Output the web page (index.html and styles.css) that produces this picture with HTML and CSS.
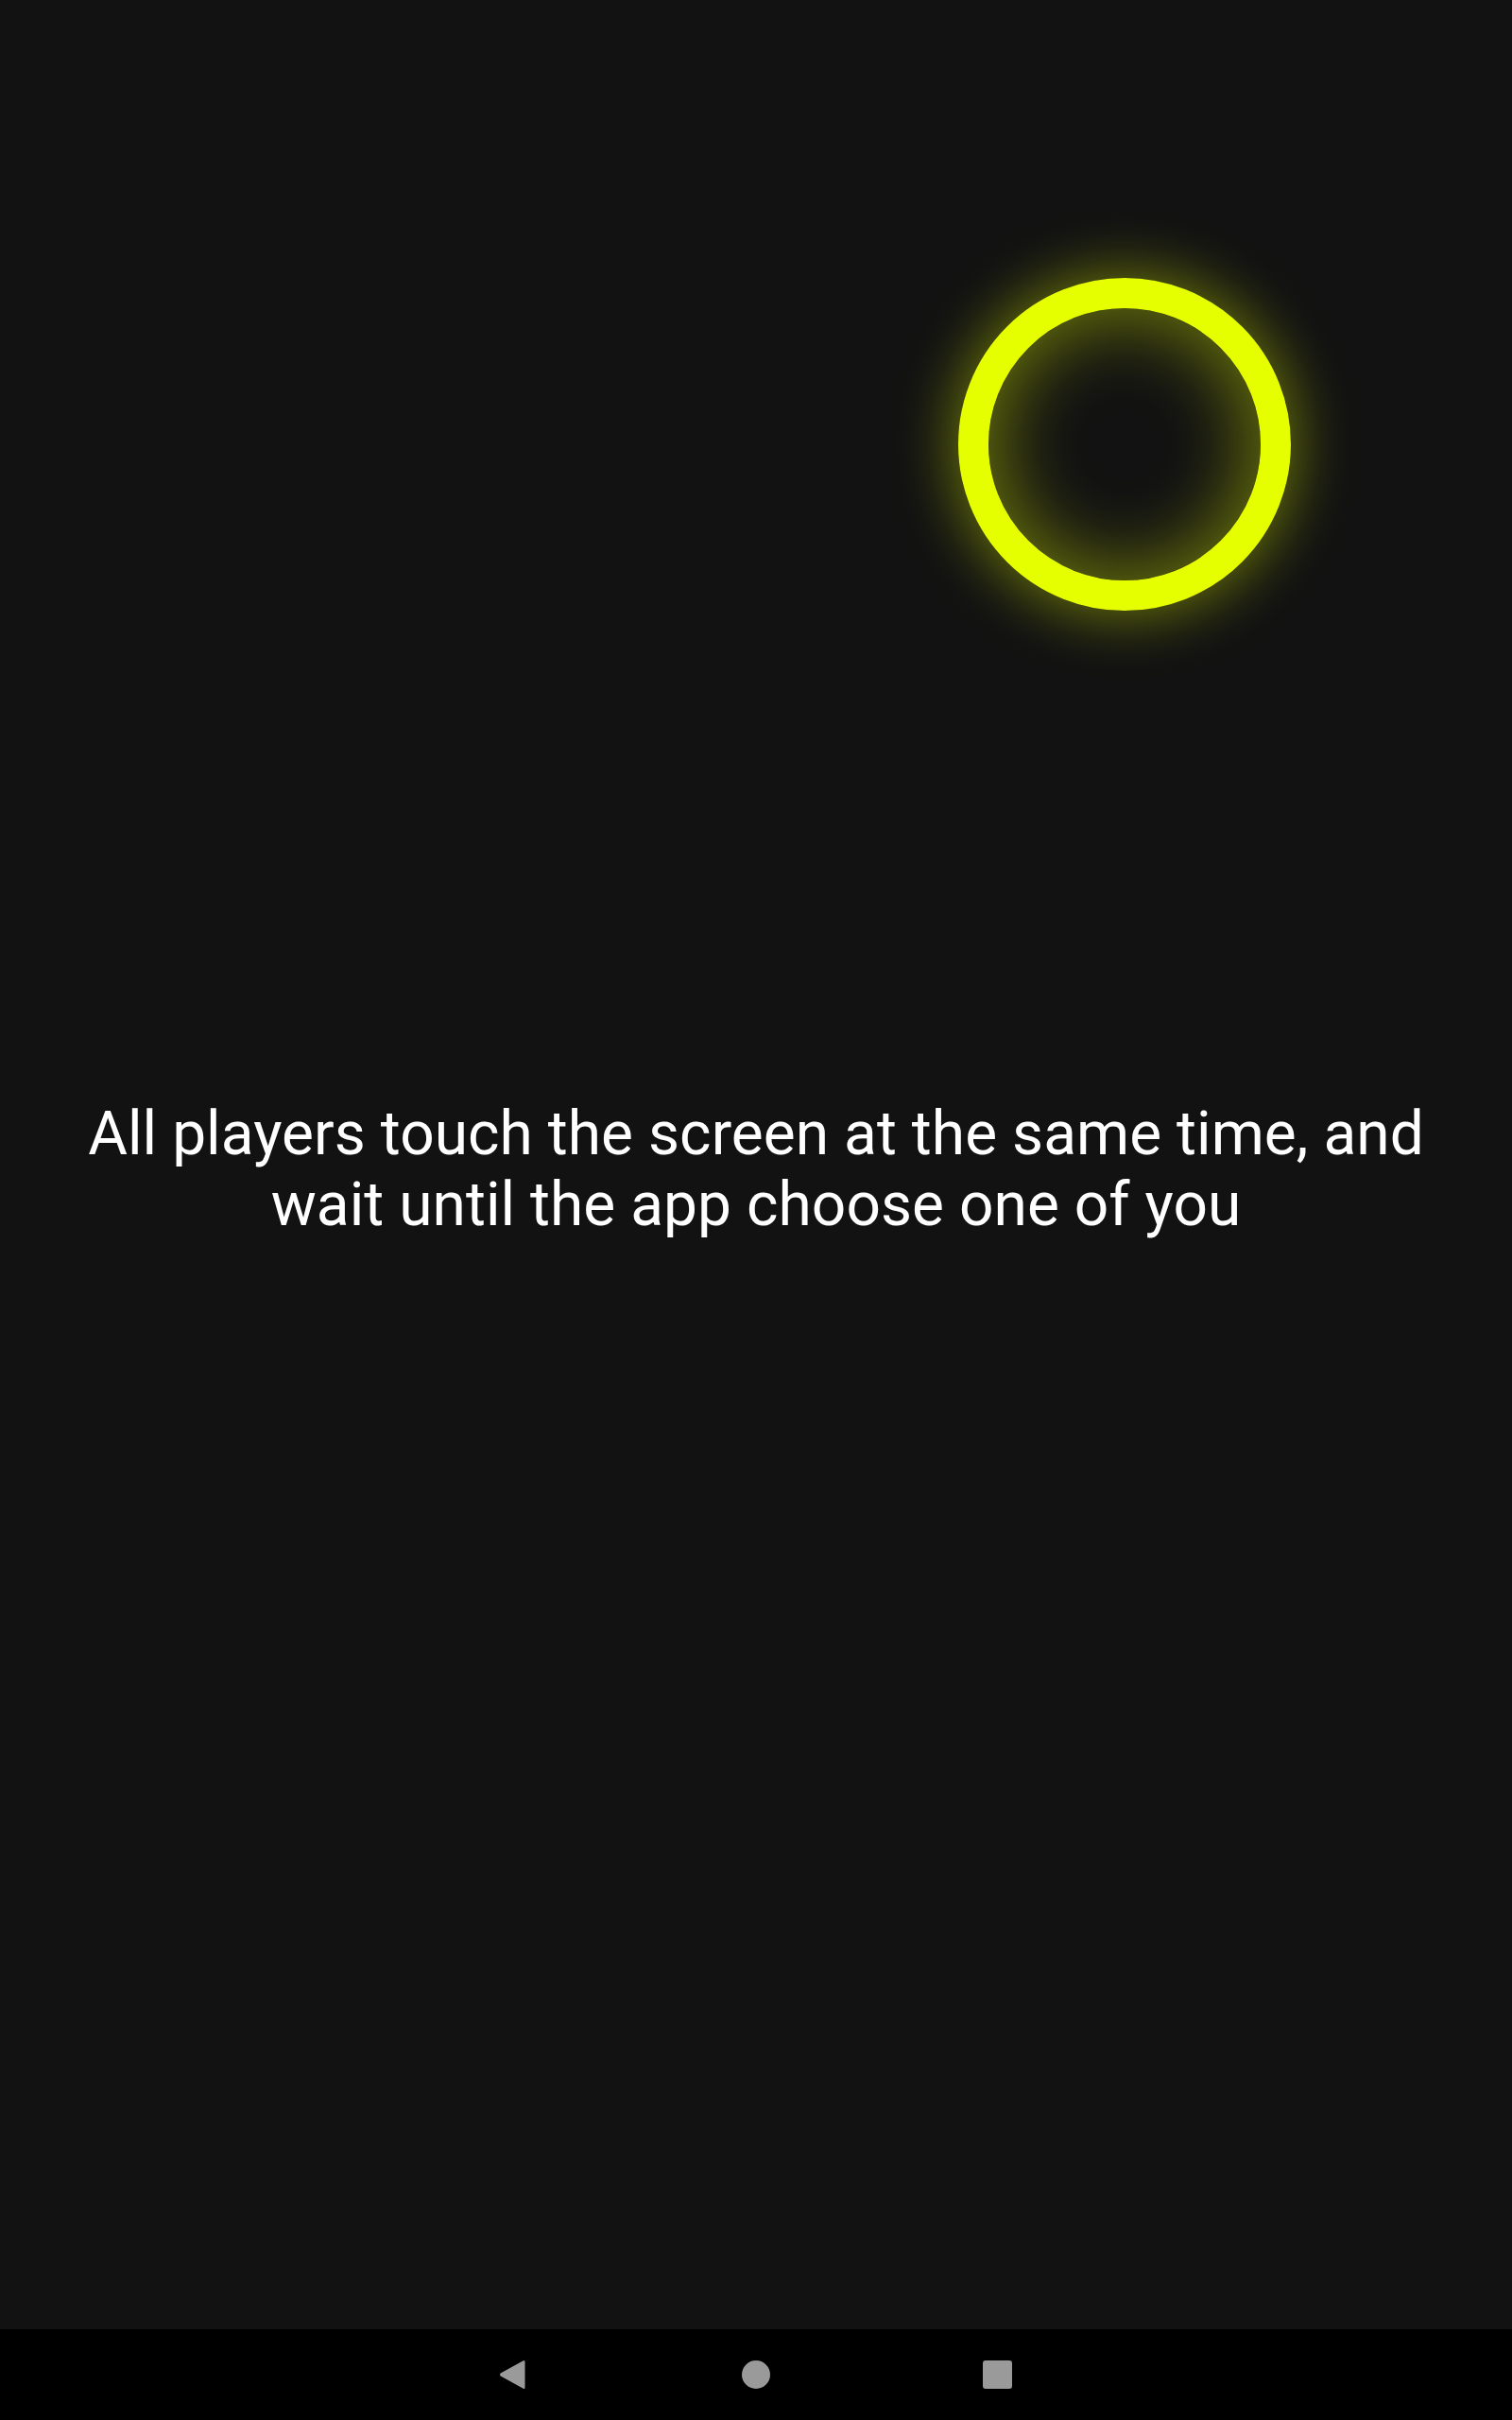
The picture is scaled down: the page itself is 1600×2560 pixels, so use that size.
FILE: index.html
```html
<!DOCTYPE html>
<html lang="en">
<head>
<meta charset="utf-8">
<title>Chooser</title>
<link rel="stylesheet" href="styles.css">
</head>
<body>
<div class="screen">
  <main class="stage">
    <div class="touch" aria-hidden="true"></div>
    <p class="hint">All players touch the screen at the same time, and wait until the app choose one of you</p>
  </main>
  <nav class="navbar">
    <svg class="nav-back" width="30" height="34" viewBox="0 0 30 34" aria-label="Back">
      <path d="M29.5 3.5 Q29.5 1 27.3 2.4 L3.7 15.6 Q2 17 3.7 18.4 L27.3 31.6 Q29.5 33 29.5 30.5 Z" fill="#9a9a9a"/>
    </svg>
    <span class="nav-home" aria-label="Home"></span>
    <span class="nav-recent" aria-label="Recents"></span>
  </nav>
</div>
</body>
</html>
```
FILE: styles.css
```css
html, body {
  margin: 0;
  padding: 0;
  background: #121212;
}
.screen {
  width: 1600px;
  height: 2560px;
  display: flex;
  flex-direction: column;
  background: #121212;
  font-family: Roboto, "Noto Sans", sans-serif;
}
.stage {
  position: relative;
  flex: 1;
  display: flex;
  align-items: center;
  justify-content: center;
  padding: 10px 80px 0;
}
.touch {
  position: absolute;
  left: 1014px;
  top: 294px;
  width: 288px;
  height: 288px;
  border: 32px solid #e6ff00;
  border-radius: 50%;
  box-shadow: 0 0 60px 8px rgba(230, 255, 0, 0.4), inset 0 0 80px 10px rgba(230, 255, 0, 0.42);
}
.hint {
  margin: 0;
  color: #ffffff;
  font-size: 64px;
  line-height: 75px;
  font-weight: 400;
  letter-spacing: 0.05px;
  text-align: center;
}
.navbar {
  height: 96px;
  background: #000000;
  display: flex;
  align-items: center;
  justify-content: flex-start;
  padding-left: 526px;
}
.navbar > * {
  flex: none;
  display: block;
}
.nav-home {
  width: 30px;
  height: 30px;
  border-radius: 50%;
  background: #9a9a9a;
  margin-left: 229px;
}
.nav-recent {
  width: 31px;
  height: 30px;
  border-radius: 3px;
  background: #9a9a9a;
  margin-left: 225px;
}
```
